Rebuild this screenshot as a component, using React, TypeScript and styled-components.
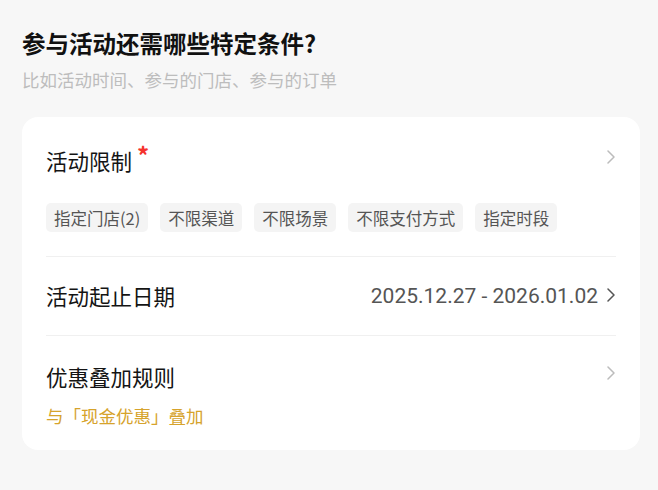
import React from "react";
import styled, { createGlobalStyle } from "styled-components";

const Global = createGlobalStyle`
  html, body { margin: 0; padding: 0; background: #f7f7f7; }
  body { font-family: "Noto Sans CJK SC", "Noto Sans", sans-serif; }
`;

const Page = styled.div`
  width: 658px;
  min-height: 490px;
  box-sizing: border-box;
  padding: 28px 18px 40px 22px;
  background: #f7f7f7;
`;

const Title = styled.h1`
  margin: 0;
  font-size: 23.5px;
  line-height: 30px;
  font-weight: 700;
  color: #111;
`;

const Subtitle = styled.p`
  margin: 10px 0 0;
  font-size: 17.5px;
  line-height: 24px;
  color: #bdbdbd;
`;

const Card = styled.div`
  margin-top: 25px;
  background: #fff;
  border-radius: 16px;
  padding: 0 24px;
  display: flex;
  flex-direction: column;
`;

const Section = styled.div<{ $pt: number; $pb: number; $divider?: boolean }>`
  padding-top: ${(p) => p.$pt}px;
  padding-bottom: ${(p) => p.$pb}px;
  border-bottom: ${(p) => (p.$divider ? "1px solid #f0f0f0" : "none")};
  display: flex;
  flex-direction: column;
`;

const Row = styled.div`
  display: flex;
  align-items: center;
  justify-content: space-between;
`;

const Label = styled.div`
  display: flex;
  align-items: flex-start;
  font-size: 21.5px;
  line-height: 30px;
  color: #141414;
`;

const Required = styled.span`
  color: #f5322d;
  font-size: 24px;
  line-height: 24px;
  margin-left: 5px;
  margin-top: -3px;
  font-weight: 700;
`;

const Value = styled.div`
  display: flex;
  align-items: center;
  gap: 8px;
  font-family: Roboto, "Noto Sans", sans-serif;
  font-size: 21px;
  line-height: 30px;
  color: #555;
`;

const Chevron = styled.svg<{ $up?: number }>`
  flex: none;
  margin-top: ${(p) => (p.$up ? -p.$up : 0)}px;
`;

const Tags = styled.div`
  display: flex;
  gap: 12px;
  margin-top: 27px;
`;

const Tag = styled.span`
  height: 29px;
  padding: 0 8px;
  display: inline-flex;
  align-items: center;
  background: #f4f4f4;
  border-radius: 5px;
  font-size: 16.5px;
  color: #555;
`;

const Note = styled.div`
  margin-top: 12px;
  font-size: 17.5px;
  line-height: 24px;
  color: #d6a32c;
`;

const Arrow = ({ color, up }: { color: string; up?: number }) => (
  <Chevron $up={up} width="10" height="14" viewBox="0 0 10 14">
    <polyline
      points="2,1 8,7 2,13"
      fill="none"
      stroke={color}
      strokeWidth="1.5"
      strokeLinecap="round"
      strokeLinejoin="round"
    />
  </Chevron>
);

const tags = ["指定门店(2)", "不限渠道", "不限场景", "不限支付方式", "指定时段"];

export default function App() {
  return (
    <>
      <Global />
      <Page>
        <Title>参与活动还需哪些特定条件?</Title>
        <Subtitle>比如活动时间、参与的门店、参与的订单</Subtitle>
        <Card>
          <Section $pt={29} $pb={24} $divider>
            <Row>
              <Label>
                活动限制<Required>*</Required>
              </Label>
              <Arrow color="#bcbcbc" up={8} />
            </Row>
            <Tags>
              {tags.map((t) => (
                <Tag key={t}>{t}</Tag>
              ))}
            </Tags>
          </Section>
          <Section $pt={24} $pb={24} $divider>
            <Row>
              <Label>活动起止日期</Label>
              <Value>
                2025.12.27 - 2026.01.02
                <Arrow color="#555" up={2} />
              </Value>
            </Row>
          </Section>
          <Section $pt={26} $pb={22}>
            <Row>
              <Label>优惠叠加规则</Label>
              <Arrow color="#bcbcbc" up={8} />
            </Row>
            <Note>与「现金优惠」叠加</Note>
          </Section>
        </Card>
      </Page>
    </>
  );
}
